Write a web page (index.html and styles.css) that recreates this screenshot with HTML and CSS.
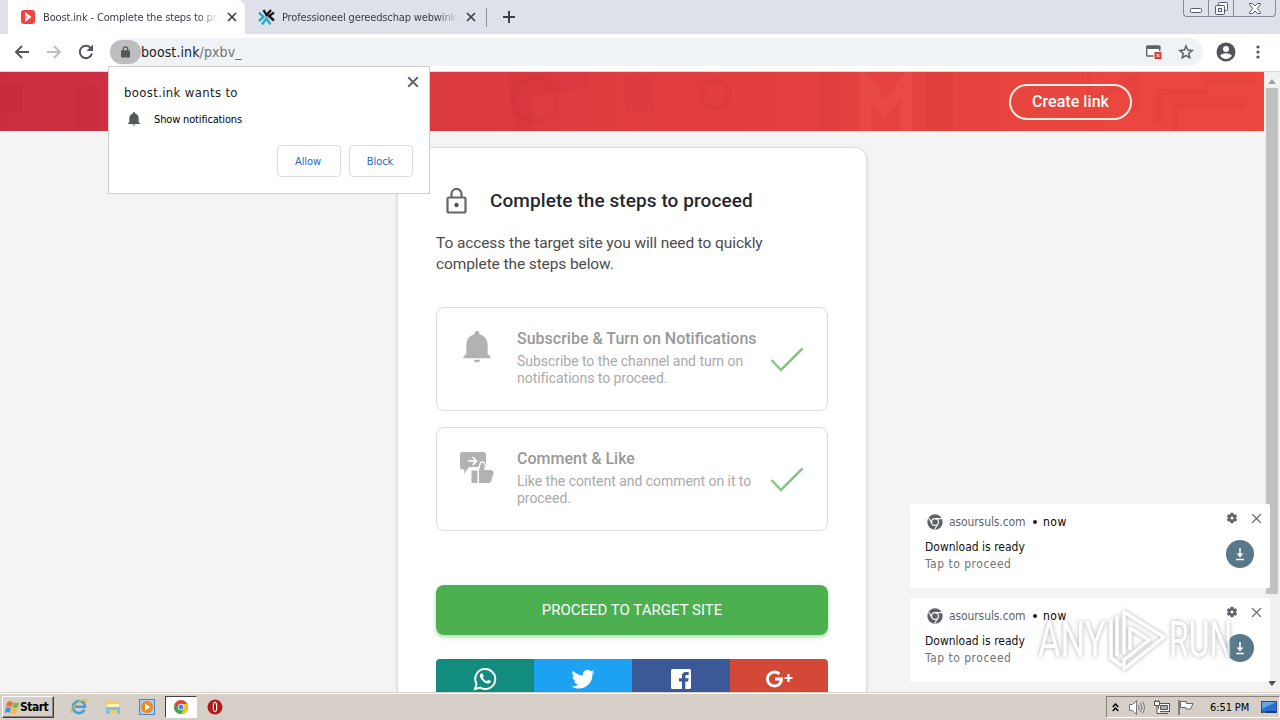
FILE: index.html
```html
<!DOCTYPE html>
<html lang="en">
<head>
    <meta charset="UTF-8">
    <meta name="viewport" content="width=device-width, initial-scale=1.0">
    <title>Boost.ink - Complete the steps to proceed</title>
    <link rel="stylesheet" href="styles.css">
</head>
<body>
    <!-- shared icons -->
    <svg class="defs" width="0" height="0">
        <symbol id="close" viewBox="0 0 10 10"><path d="M1 1l8 8M9 1L1 9" fill="none" stroke="currentColor"/></symbol>
        <symbol id="bell" viewBox="0 0 24 24"><path d="M12 23.500c1.300 0 2.300-.9 2.300-2H9.700c0 1.100 1 2 2.300 2zM20 17V10.500c0-4-2.500-7.200-6.200-8.100V1.800a1.800 1.800 0 0 0-3.600 0v.6C6.500 3.300 4 6.500 4 10.500V17l-2.300 2.500v1h20.600v-1z" fill="currentColor"/></symbol>
        <symbol id="check" viewBox="0 0 34 26"><path d="M1.500 13l9.500 10L32.500 1.500" fill="none" stroke="#82c785" stroke-width="2.500"/></symbol>
        <symbol id="chrome" viewBox="0 0 16 16">
            <circle cx="8" cy="8" r="7.700" fill="#5f6368"/>
            <circle cx="8" cy="8" r="3.400" fill="none" stroke="#fff" stroke-width="1.100"/>
            <path d="M8 4.600h6.800M5 9.700L1.700 4M11 9.700L7.600 15.500" stroke="#fff" stroke-width="1.100"/>
        </symbol>
        <symbol id="gear" viewBox="0 0 24 24"><path d="M19.400 13c0-.3.1-.6.1-1s0-.7-.1-1l2.100-1.600c.2-.2.2-.4.1-.6l-2-3.500c-.1-.2-.4-.3-.6-.2l-2.500 1c-.5-.4-1.100-.7-1.700-1l-.4-2.600c0-.3-.2-.5-.5-.5h-4c-.3 0-.5.200-.5.500L9 5.100c-.6.3-1.200.6-1.700 1l-2.500-1c-.2-.1-.5 0-.6.200l-2 3.500c-.1.200-.1.500.1.600L4.500 11a8 8 0 0 0 0 2l-2.200 1.600c-.2.200-.2.400-.1.600l2 3.500c.1.200.4.300.6.200l2.500-1c.5.400 1.100.7 1.700 1l.4 2.600c0 .3.200.5.500.5h4c.3 0 .5-.2.500-.5l.4-2.600c.6-.3 1.200-.6 1.700-1l2.500 1c.2.100.5 0 .6-.2l2-3.500c.1-.2.1-.5-.1-.6zM12 15.500a3.500 3.500 0 1 1 0-7 3.500 3.500 0 0 1 0 7z" fill="currentColor" stroke="currentColor" stroke-width="1"/></symbol>
    </svg>

    <div class="tabs">
        <div class="tab active">
            <svg width="14" height="14" viewBox="0 0 14 14"><rect width="14" height="14" rx="3" fill="#ef4444"/><path d="M4 2l6.500 5L4 12V8.500L6 7 4 5.500z" fill="#fff"/><path d="M4 4.500L7 7 4 9.500z" fill="#f59a9a"/></svg>
            <span class="tab-title title-1">Boost.ink - Complete the steps to proceed</span>
            <svg class="tab-close" width="10" height="10"><use href="#close"/></svg>
        </div>
        <div class="tab">
            <svg width="17" height="16" viewBox="0 0 17 16" fill="none" stroke-width="2.400"><path d="M5.500 1l3 5 4.500-5M16 3.500l-5 3.500 5 4.500" stroke="#16161c"/><path d="M1 3.500L5.500 8 1 12M4 15.500l4.500-6 4 6" stroke="#2aa9cf"/></svg>
            <span class="tab-title title-2">Professioneel gereedschap webwinkel</span>
            <svg class="tab-close" width="10" height="10"><use href="#close"/></svg>
        </div>
        <div class="new-tab"><svg width="12" height="12" viewBox="0 0 12 12"><path d="M6 0v12M0 6h12" stroke="#3c4043" stroke-width="2"/></svg></div>
        <div class="window-buttons">
            <span><svg width="12" height="5" viewBox="0 0 12 5"><rect x=".5" y=".5" width="11" height="4" rx="1" fill="#fff" stroke="#555b69"/></svg></span>
            <span><svg width="13" height="13" viewBox="0 0 13 13" fill="#f4f5f8" stroke="#555b69"><rect x="3.500" y=".5" width="9" height="8" rx="1"/><rect x=".5" y="3.500" width="9" height="9" rx="1"/><rect x="3.500" y="6.500" width="3" height="3"/></svg></span>
            <span class="wide"><svg width="12" height="11" viewBox="0 0 12 11"><path d="M.5.500h3L6 3 8.500.500h3v1L8.200 5.500l3.300 4v1h-3L6 8l-2.500 2.500h-3v-1l3.300-4L.5 1.500z" fill="#fff" stroke="#555b69"/></svg></span>
        </div>
    </div>

    <div class="toolbar">
        <svg width="16" height="14" viewBox="0 0 16 14" fill="none" stroke="#54575b" stroke-width="2"><path d="M15 7H2M8 1L2 7l6 6"/></svg>
        <svg width="16" height="14" viewBox="0 0 16 14" fill="none" stroke="#bcbec1" stroke-width="2"><path d="M1 7h13M8 1l6 6-6 6"/></svg>
        <svg width="16" height="16" viewBox="0 0 16 16"><path d="M13.200 4.500A6.200 6.200 0 1 0 14 9.500" fill="none" stroke="#54575b" stroke-width="2"/><path d="M15 .5V7H8.500z" fill="#54575b"/></svg>
        <div class="address">
            <span class="lock"><svg width="9" height="12" viewBox="0 0 10 13"><rect y="4.500" width="10" height="8" rx="1" fill="#55585c"/><path d="M2.500 5V3.200a2.500 2.500 0 0 1 5 0V5" fill="none" stroke="#55585c" stroke-width="1.400"/></svg></span>
            <span class="url">boost.ink<i>/pxbv_</i></span>
            <svg class="blocked" width="16" height="14" viewBox="0 0 16 14"><rect x=".7" y="1" width="13" height="10" rx="1" fill="#fff" stroke="#5f6368" stroke-width="1.400"/><path d="M0 1h14.400v3H0z" fill="#5f6368"/><rect x="7.500" y="6" width="8.500" height="8" fill="#f0f3f6"/><rect x="8.500" y="7" width="7" height="7" fill="#dc3c32"/><path d="M10.500 9l3 3M13.500 9l-3 3" stroke="#fff"/></svg>
            <svg width="16" height="16" viewBox="0 0 16 16"><path d="M8 2l1.700 4.100 4.500.4-3.400 2.900 1 4.400L8 11.500l-3.800 2.300 1-4.400-3.400-2.900 4.500-.4z" fill="none" stroke="#5f6368" stroke-width="1.500"/></svg>
        </div>
        <svg class="avatar" width="20" height="20" viewBox="0 0 20 20"><circle cx="10" cy="10" r="9.500" fill="#515458"/><circle cx="10" cy="7" r="3" fill="#fff"/><path d="M4 13.800c1.200-1.900 4-2.600 6-2.600s4.800.7 6 2.600a7.300 7.300 0 0 1-12 0z" fill="#fff"/></svg>
        <svg class="menu" width="4" height="14" viewBox="0 0 4 14" fill="#515458"><circle cx="2" cy="2" r="1.600"/><circle cx="2" cy="7" r="1.600"/><circle cx="2" cy="12" r="1.600"/></svg>
    </div>

    <div class="viewport">
        <div class="page">
            <header class="banner">
                <svg class="pattern" width="1264" height="59" viewBox="0 0 1264 59" fill="none">
                    <g fill="#b02030" opacity=".07"><path d="M0 12h22v28H0zM75 14h26v45H75zM508 0h80v15l-55 10v34h-18zM626 5h28v34h-28zM820 0h20v59h-20zM925 0h28v59h-28z"/></g>
                    <g stroke="#b02030" opacity=".07" stroke-width="6"><path d="M1090 0v30l45-25v35M1158 52V20h50M1175 59V34h70M1205 10h50"/><circle cx="535" cy="28" r="22"/><circle cx="715" cy="22" r="14"/></g>
                    <path d="M865 59V8l20 30 22-30v51" stroke="#ff8a70" stroke-width="12" opacity=".1"/>
                </svg>
                <a class="create">Create link</a>
            </header>
            <main class="card">
                <div class="card-head">
                    <svg width="22" height="26" viewBox="0 0 22 26" fill="none" stroke="#666" stroke-width="2.200"><rect x="1.500" y="9.500" width="18" height="15" rx="1.500"/><path d="M5.500 9V6a5 5 0 0 1 10 0v3"/><circle cx="10.500" cy="17" r="2.200" fill="#555" stroke="none"/></svg>
                    <h1>Complete the steps to proceed</h1>
                </div>
                <p class="intro">To access the target site you will need to quickly complete the steps below.</p>
                <div class="step">
                    <svg class="step-icon" width="32" height="32"><use href="#bell"/></svg>
                    <div class="step-text">
                        <h2>Subscribe &amp; Turn on Notifications</h2>
                        <p>Subscribe to the channel and turn on notifications to proceed.</p>
                    </div>
                    <svg class="check" width="34" height="26"><use href="#check"/></svg>
                </div>
                <div class="step">
                    <svg class="step-icon" width="34" height="34" viewBox="0 0 34 34"><path d="M2.500 1h21A2.500 2.500 0 0 1 26 3.500V16H9l-5 7 .5-4.500h-2A2.500 2.500 0 0 1 0 16V3.500A2.500 2.500 0 0 1 2.500 1z" fill="#b2b2b2"/><path d="M8 10h8M12.500 6l4 4-4 4" fill="none" stroke="#fff" stroke-width="1.600"/><path d="M10 18h8l2-7q4-2 5.500 2v5h9v15H10z" fill="#fff"/><path d="M11.500 19.500h6V32h-6zM19 19.500l2-7.500c2-1 3.500.5 3.500 2.500v4.500H31q3 .5 2.500 3.500L31 30.500q-.7 1.500-2.500 1.500H19z" fill="#b2b2b2"/></svg>
                    <div class="step-text">
                        <h2>Comment &amp; Like</h2>
                        <p>Like the content and comment on it to proceed.</p>
                    </div>
                    <svg class="check" width="34" height="26"><use href="#check"/></svg>
                </div>
                <a class="proceed">PROCEED TO TARGET SITE</a>
                <div class="social">
                    <a class="whatsapp"><svg width="24" height="24" viewBox="0 0 24 24"><path d="M2 22l1.500-5.200A10 10 0 1 1 7.200 20.600z" fill="none" stroke="#fff" stroke-width="2"/><path d="M8 6.500c-1.800 1-1.500 3.500.5 6s5 4.500 7.500 4c1.500-.5 2-1.500 1.800-2.400l-2.600-1.300-1.300 1.400c-2-.7-3.300-2-4.100-3.700l1-1.200-1.100-2.700z" fill="#fff"/></svg></a>
                    <a class="twitter"><svg width="24" height="24" viewBox="0 0 24 24"><path d="M23.600 4.900c-.8.400-1.700.6-2.700.8 1-.6 1.700-1.500 2.100-2.600-.9.500-1.900.9-3 1.100a4.800 4.800 0 0 0-8.100 4.300c-4-.2-7.500-2.100-9.900-5-1.300 2.200-.6 5 1.500 6.400-.8 0-1.500-.2-2.100-.6 0 2.300 1.600 4.300 3.800 4.800-.7.200-1.500.2-2.200.1.600 1.900 2.400 3.200 4.500 3.300A9.600 9.600 0 0 1 .4 19.500c2.100 1.300 4.700 2.100 7.400 2.100 9 0 14-7.500 13.700-14.300.9-.7 1.600-1.500 2.100-2.400z" fill="#fff"/></svg></a>
                    <a class="facebook"><svg width="20" height="20" viewBox="0 0 20 20"><rect width="20" height="20" rx="1.500" fill="#fff"/><path d="M11 20v-7.500H8V9.300h3V6.800C11 4.200 12.600 3 15 3h2.700v3h-1.900c-1.200 0-1.500.6-1.500 1.500v1.800h3.300l-.5 3.200h-2.800V20z" fill="#3b5998"/></svg></a>
                    <a class="google"><svg width="27" height="18" viewBox="0 0 27 18" fill="none" stroke="#fff"><path d="M13.400 4A7 7 0 1 0 15.500 9H9" stroke-width="2.800"/><path d="M22.500 4v8M18.500 8h8" stroke-width="2.200"/></svg></a>
                </div>
            </main>
        </div>
        <div class="scrollbar">
            <svg width="8" height="5" viewBox="0 0 8 5"><path d="M0 5l4-5 4 5z" fill="#a3a3a3"/></svg>
            <div class="thumb"></div>
            <svg width="8" height="5" viewBox="0 0 8 5"><path d="M0 0l4 5 4-5z" fill="#505050"/></svg>
        </div>
    </div>

    <div class="taskbar">
        <div class="start">
            <svg width="15" height="15" viewBox="0 0 15 15"><path d="M2.500 2Q5 .5 7.500 2L6.300 7Q4 5.500 1 7z" fill="#ee6a34"/><path d="M8.300 2.300q2.500 1.500 5.700 0L12.800 7.500q-3 1.300-5.700-.2z" fill="#7db843"/><path d="M.8 8Q3.500 6.500 6 8l-1.300 5Q2.500 11.500 0 13z" fill="#4a8fdc"/><path d="M6.800 8.300q3 1.500 5.700.2L11.200 13.500q-3 1.300-5.700-.2z" fill="#f6bd34"/></svg>
            Start
        </div>
        <div class="quick">
            <span><svg width="18" height="18" viewBox="0 0 18 18" fill="none"><path d="M14.500 11.500A6 6 0 1 1 15 8.800H5" stroke="#3d9fe0" stroke-width="2.600"/><path d="M1.500 15C-1 11 10 1 15.500 1.800q1.500.7.300 3" stroke="#e5b83c" stroke-width="1.300"/></svg></span>
            <span><svg width="16" height="16" viewBox="0 0 16 16"><path d="M1 3l2-2h4l1 2h7v11H1z" fill="#e9cf70"/><path d="M2 5h12v4H2z" fill="#fff3b5"/><path d="M1 8h14v7h-3v-4H5v4H1z" fill="#7bc2e8"/></svg></span>
            <span><svg width="16" height="16" viewBox="0 0 16 16"><rect x=".5" y=".5" width="15" height="15" fill="#a9cdf0" stroke="#4e86c3"/><circle cx="8" cy="8" r="6" fill="#f28a17"/><path d="M6 4.500L11.500 8 6 11.500z" fill="#fff"/></svg></span>
            <span class="running"><svg width="14" height="14" viewBox="0 0 14 14"><circle cx="7" cy="7" r="7" fill="#e34133"/><path d="M1 3.500A7 7 0 0 0 7 14l3-5.300H4z" fill="#36a853"/><path d="M7 14A7 7 0 0 0 13.200 4H7l3 4.700z" fill="#fbc116"/><circle cx="7" cy="7" r="3.200" fill="#fff"/><circle cx="7" cy="7" r="2.500" fill="#4285f4"/></svg></span>
            <span><svg width="16" height="16" viewBox="0 0 16 16"><circle cx="8" cy="8" r="7.500" fill="#b81818"/><ellipse cx="8" cy="8" rx="2.300" ry="5.200" fill="#fff"/><ellipse cx="8" cy="8" rx="1" ry="4.300" fill="#8c1111"/></svg></span>
        </div>
        <div class="tray">
            <svg class="chevrons" width="7" height="9" viewBox="0 0 7 9" fill="none" stroke="#000" stroke-width="1.500"><path d="M.7 4l2.800-3 2.800 3M.7 8l2.800-3 2.800 3"/></svg>
            <svg class="speaker" width="17" height="15" viewBox="0 0 17 15" fill="none" stroke="#777"><path d="M.5 4.500h3L7.500.5v14l-4-4h-3z" fill="#fff"/><path d="M9.500 5q1.500 2.500 0 5M11.500 3q3 4.500 0 9M13.500 1.500q4 6 0 12"/></svg>
            <svg class="network" width="16" height="15" viewBox="0 0 16 15" stroke="#555"><rect x="4.500" y="3.500" width="11" height="8" fill="#fff"/><path d="M6.500 5.500h7v4h-7z" fill="#aaa"/><path d="M7 13.500h7" /><path d="M.5 1.500h5v4h-5zM3 6v7.500h4M1.500 0v2M4.500 0v2" fill="#fff"/></svg>
            <svg class="flag" width="16" height="15" viewBox="0 0 16 15" stroke="#666"><path d="M1 0v15" stroke-width="1.500"/><path d="M2.500 1.500h6v2h6.500L12.500 9H8V7.500H2.500z" fill="#fff"/></svg>
            <span class="clock">6:51 PM</span>
            <svg width="16" height="13" viewBox="0 0 16 13"><rect x=".5" y=".5" width="15" height="11" fill="#2b70cf" stroke="#254f91"/><path d="M1 1h14L1 8z" fill="#64a4e8"/><path d="M1 11h14" stroke="#153a74" stroke-width="2"/><path d="M2 11h2" stroke="#8ad44a"/></svg>
        </div>
    </div>

    <!-- permission prompt -->
    <div class="prompt">
        <svg class="prompt-close" width="12" height="12"><use href="#close"/></svg>
        <div class="prompt-title">boost.ink wants to</div>
        <div class="prompt-row"><svg width="14" height="16"><use href="#bell"/></svg><span>Show notifications</span></div>
        <div class="prompt-buttons"><button>Allow</button><button>Block</button></div>
    </div>

    <!-- desktop notifications -->
    <div class="toasts">
        <div class="toast">
            <div class="toast-head"><svg width="16" height="16"><use href="#chrome"/></svg><span class="site">asoursuls.com</span><span class="dot"></span><span class="now">now</span><svg class="gear" width="12" height="12"><use href="#gear"/></svg><svg class="dismiss" width="11" height="11"><use href="#close"/></svg></div>
            <div class="toast-body">
                <div><div class="ready">Download is ready</div><div class="tap">Tap to proceed</div></div>
                <svg width="28" height="28" viewBox="0 0 28 28"><circle cx="14" cy="14" r="14" fill="#58798a"/><path d="M14 8v7M10 19.500h8" stroke="#fff" stroke-width="1.500"/><path d="M10.500 13.500h7L14 17.500z" fill="#fff"/></svg>
            </div>
        </div>
        <div class="toast">
            <div class="toast-head"><svg width="16" height="16"><use href="#chrome"/></svg><span class="site">asoursuls.com</span><span class="dot"></span><span class="now">now</span><svg class="gear" width="12" height="12"><use href="#gear"/></svg><svg class="dismiss" width="11" height="11"><use href="#close"/></svg></div>
            <div class="toast-body">
                <div><div class="ready">Download is ready</div><div class="tap">Tap to proceed</div></div>
                <svg width="28" height="28" viewBox="0 0 28 28"><circle cx="14" cy="14" r="14" fill="#58798a"/><path d="M14 8v7M10 19.500h8" stroke="#fff" stroke-width="1.500"/><path d="M10.500 13.500h7L14 17.500z" fill="#fff"/></svg>
            </div>
        </div>
    </div>

    <div class="watermark">
        <span class="any">ANY</span>
        <svg width="58" height="64" viewBox="0 0 58 64" fill="none" stroke="#fff" stroke-width="3.500" stroke-linejoin="round"><path d="M3 12v38l11 8M9 8v40M16 46V4l40 25-40 32v-9l25-20-19-12v22"/></svg>
        <span class="run">RUN</span>
    </div>
</body>
</html>
```
FILE: styles.css
```css
* {
    box-sizing: border-box;
}

body {
    margin: 0;
    width: 1280px;
    height: 720px;
    overflow: hidden;
    display: flex;
    flex-direction: column;
    font-family: "DejaVu Sans Condensed", "DejaVu Sans", sans-serif;
    font-size: 11px;
    position: relative;
}

svg {
    display: block;
    flex-shrink: 0;
}

.defs {
    position: absolute;
}

/* browser window */
.tabs {
    height: 34px;
    background: #dee1e9;
    display: flex;
    padding-left: 8px;
}

.tab {
    width: 237px;
    display: flex;
    align-items: center;
    padding-left: 13px;
    color: #3c4043;
}

.tab.active {
    background: #fff;
    border-radius: 0 8px 0 0;
}

.tab-title {
    width: 176px;
    margin-left: 8px;
    overflow: hidden;
    white-space: nowrap;
    letter-spacing: -0.15px;
    -webkit-mask-image: linear-gradient(to right, #000 88%, transparent);
    mask-image: linear-gradient(to right, #000 88%, transparent);
}

.title-2 {
    margin-left: 7px;
}

.tab-close {
    margin-left: 8px;
    color: #3c4043;
    stroke-width: 1.7;
}

.new-tab {
    margin: 8px 0 0 4px;
    height: 19px;
    padding: 3px 0 0 16px;
    border-left: 1px solid #8b8f98;
}

.window-buttons {
    margin: 0 4px 0 auto;
    height: 17px;
    display: flex;
    border: 1px solid #858a97;
    border-top: 0;
    border-radius: 0 0 4px 4px;
}

.window-buttons span {
    width: 25px;
    display: flex;
    justify-content: center;
    align-items: center;
    border-right: 1px solid #858a97;
}

.window-buttons span:first-child {
    padding-top: 5px;
}

.window-buttons .wide {
    width: 41px;
    border-right: 0;
}

.toolbar {
    height: 38px;
    background: #fff;
    display: flex;
    align-items: center;
    padding: 0 20px 1px 14px;
    border-bottom: 1px solid #d9dadc;
}

.toolbar > svg {
    margin-right: 16px;
}

.toolbar > .avatar {
    margin: 0 20px 0 13px;
}

.toolbar > .menu {
    margin: 0;
}

.address {
    flex: 1;
    height: 28px;
    border-radius: 14px;
    background: #f0f3f6;
    display: flex;
    align-items: center;
    padding-right: 9px;
}

.lock {
    width: 31px;
    height: 24px;
    border-radius: 12px;
    background: #bcbec0;
    display: flex;
    justify-content: center;
    align-items: center;
}

.url {
    font-size: 14px;
    letter-spacing: 0.1px;
    color: #202124;
}

.url i {
    font-style: normal;
    color: #6f7377;
}

.blocked {
    margin: 0 16px 0 auto;
}

.viewport {
    height: 620px;
    display: flex;
    overflow: hidden;
}

.page {
    width: 1264px;
    background: #f4f4f4;
    font-family: Roboto, sans-serif;
}

.banner {
    height: 59px;
    background: linear-gradient(to right, #ca2e40, #da3940 34%, #e23e40 55%, #ea463f 85%, #ec463f);
    display: flex;
    justify-content: flex-end;
    align-items: center;
    padding: 0 132px 0 0;
    position: relative;
}

.pattern {
    position: absolute;
    left: 0;
    top: 0;
}

.create {
    width: 123px;
    height: 36px;
    border: 2px solid #fbefe4;
    border-radius: 18px;
    color: #fff;
    font-size: 16px;
    font-weight: 500;
    letter-spacing: 0.05px;
    line-height: 31px;
    text-align: center;
    position: relative;
}

.card {
    width: 470px;
    height: 600px;
    margin: 16px 0 0 397px;
    padding: 39px 38px 0;
    background: #fff;
    border: 1px solid #dedede;
    border-radius: 12px;
    box-shadow: 0 1px 3px rgba(0, 0, 0, 0.15);
}

.card-head {
    display: flex;
    align-items: center;
    height: 27px;
    padding-left: 10px;
}

h1 {
    margin: 0 0 0 22px;
    font-size: 19px;
    font-weight: 500;
    letter-spacing: 0.08px;
    color: #25282c;
    white-space: nowrap;
}

.intro {
    margin: 19px 0 32px;
    font-size: 15.500px;
    letter-spacing: -0.1px;
    line-height: 21px;
    color: #4c4c4c;
}

.step {
    height: 104px;
    margin-bottom: 16px;
    border: 1px solid #dcdcdc;
    border-radius: 8px;
    display: flex;
    padding: 22px 0 0 23px;
}

.step-icon {
    color: #b2b2b2;
    width: 34px;
    margin-top: 1px;
}

.step-text {
    width: 244px;
    margin-left: 23px;
}

h2 {
    margin: 0;
    font-size: 16px;
    line-height: 18px;
    font-weight: 500;
    color: #999;
    white-space: nowrap;
}

.step-text p {
    margin: 5px 0 0;
    font-size: 14px;
    letter-spacing: -0.04px;
    line-height: 17px;
    color: #aaa;
}

.check {
    margin: 17px 0 0 9px;
}

.proceed {
    display: block;
    height: 50px;
    margin-top: 54px;
    border-radius: 8px;
    background: #4caf50;
    box-shadow: 0 2px 4px rgba(76, 175, 80, 0.5);
    color: #fff;
    font-size: 15px;
    line-height: 50px;
    text-align: center;
}

.social {
    display: flex;
    height: 40px;
    margin-top: 24px;
    border-radius: 4px;
    overflow: hidden;
}

.social a {
    flex: 1;
    display: flex;
    align-items: center;
    justify-content: center;
}

.whatsapp {
    background: #128c7e;
}

.twitter {
    background: #1da1f2;
}

.facebook {
    background: #3b5998;
}

.google {
    background: #d34836;
}

.scrollbar {
    width: 16px;
    background: #f1f1f1;
    display: flex;
    flex-direction: column;
    align-items: center;
    padding: 7px 0 6px;
}

.thumb {
    width: 12px;
    height: 506px;
    margin: 4px 0 auto;
    background: #c1c1c1;
}

/* windows taskbar */
.taskbar {
    height: 28px;
    background: #d6cfc8;
    border-top: 1px solid #d6cfc8;
    box-shadow: inset 0 1px #fff;
    display: flex;
    align-items: center;
    padding: 1px 0 0 2px;
}

.start {
    width: 52px;
    height: 22px;
    border: 1px solid;
    border-color: #fff #404040 #404040 #fff;
    box-shadow: inset -1px -1px #88827c;
    display: flex;
    align-items: center;
    padding-left: 2px;
    font-weight: bold;
    font-size: 12px;
    letter-spacing: -0.5px;
}

.quick {
    display: flex;
    margin-left: 8px;
}

.quick span {
    width: 34px;
    height: 22px;
    display: flex;
    align-items: center;
    justify-content: center;
}

.quick .running {
    width: 32px;
    margin: 0 1px;
    background: #fff;
    border: 1px solid;
    border-color: #404040 #fff #fff #404040;
}

.tray {
    width: 174px;
    height: 22px;
    margin-left: auto;
    border: 1px solid;
    border-color: #88827c #fff #fff #88827c;
    display: flex;
    align-items: center;
    padding-left: 5px;
}

.speaker {
    margin-left: 10px;
}

.network {
    margin-left: 8px;
}

.flag {
    margin-left: 8px;
}

.clock {
    width: 40px;
    margin: 0 11px 0 16px;
    white-space: nowrap;
    letter-spacing: -0.1px;
}

/* permission prompt */
.prompt {
    position: absolute;
    left: 108px;
    top: 66px;
    width: 322px;
    height: 128px;
    padding: 17px 16px 0 15px;
    background: #fff;
    border: 1px solid #cfcfcf;
}

.prompt-close {
    position: absolute;
    right: 10px;
    top: 9px;
    color: #5f6368;
    stroke-width: 1.6;
}

.prompt-title {
    font-size: 13px;
    letter-spacing: 0.35px;
    line-height: 18px;
    color: #202124;
}

.prompt-row {
    display: flex;
    align-items: center;
    height: 18px;
    margin-top: 8px;
    padding-left: 3px;
    gap: 13px;
    letter-spacing: -0.15px;
}

.prompt-row svg {
    color: #55585c;
}

.prompt-buttons {
    display: flex;
    justify-content: flex-end;
    gap: 8px;
    margin-top: 17px;
}

.prompt-buttons button {
    width: 64px;
    height: 32px;
    padding: 0 2px 0 0;
    background: #fff;
    border: 1px solid #dadce0;
    border-radius: 4px;
    font: inherit;
    letter-spacing: -0.1px;
    color: #2569c5;
}

/* notifications */
.toasts {
    position: absolute;
    left: 910px;
    top: 504px;
    width: 360px;
    display: flex;
    flex-direction: column;
    gap: 10px;
}

.toast {
    height: 84px;
    padding: 9px 8px 0 15px;
    background: #fff;
    border-radius: 2px;
    font-size: 12px;
}

.toast-head {
    display: flex;
    align-items: center;
    height: 18px;
    padding-left: 2px;
}

.site {
    width: 75px;
    margin-left: 6px;
    letter-spacing: -0.1px;
    color: #5f6368;
}

.dot {
    width: 4px;
    height: 4px;
    border-radius: 50%;
    margin: 0 6px 0 9px;
    background: #222;
}

.now {
    line-height: 14px;
    letter-spacing: 0.5px;
}

.gear {
    margin: -8px 13px 0 auto;
    color: #5f6368;
}

.dismiss {
    margin-top: -8px;
    color: #5f6368;
    stroke-width: 1.2;
}

.toast-body {
    display: flex;
    justify-content: space-between;
    padding: 8px 8px 0 0;
}

.ready {
    line-height: 17px;
    color: #111;
}

.tap {
    line-height: 17px;
    letter-spacing: 0.5px;
    color: #707478;
}

.toast-body svg {
    margin-top: 1px;
}

.watermark {
    position: absolute;
    left: 1038px;
    top: 608px;
    height: 64px;
    display: flex;
    align-items: center;
    opacity: 0.8;
    filter: drop-shadow(0 0 2px #999);
    font-family: Roboto, sans-serif;
    font-size: 50px;
    line-height: 34px;
    color: #fff;
}

.watermark span {
    width: 70px;
    transform: scaleX(0.69);
    transform-origin: left;
}

.watermark svg {
    margin-right: 3px;
}

.watermark .run {
    transform: scaleX(0.64);
}
```
